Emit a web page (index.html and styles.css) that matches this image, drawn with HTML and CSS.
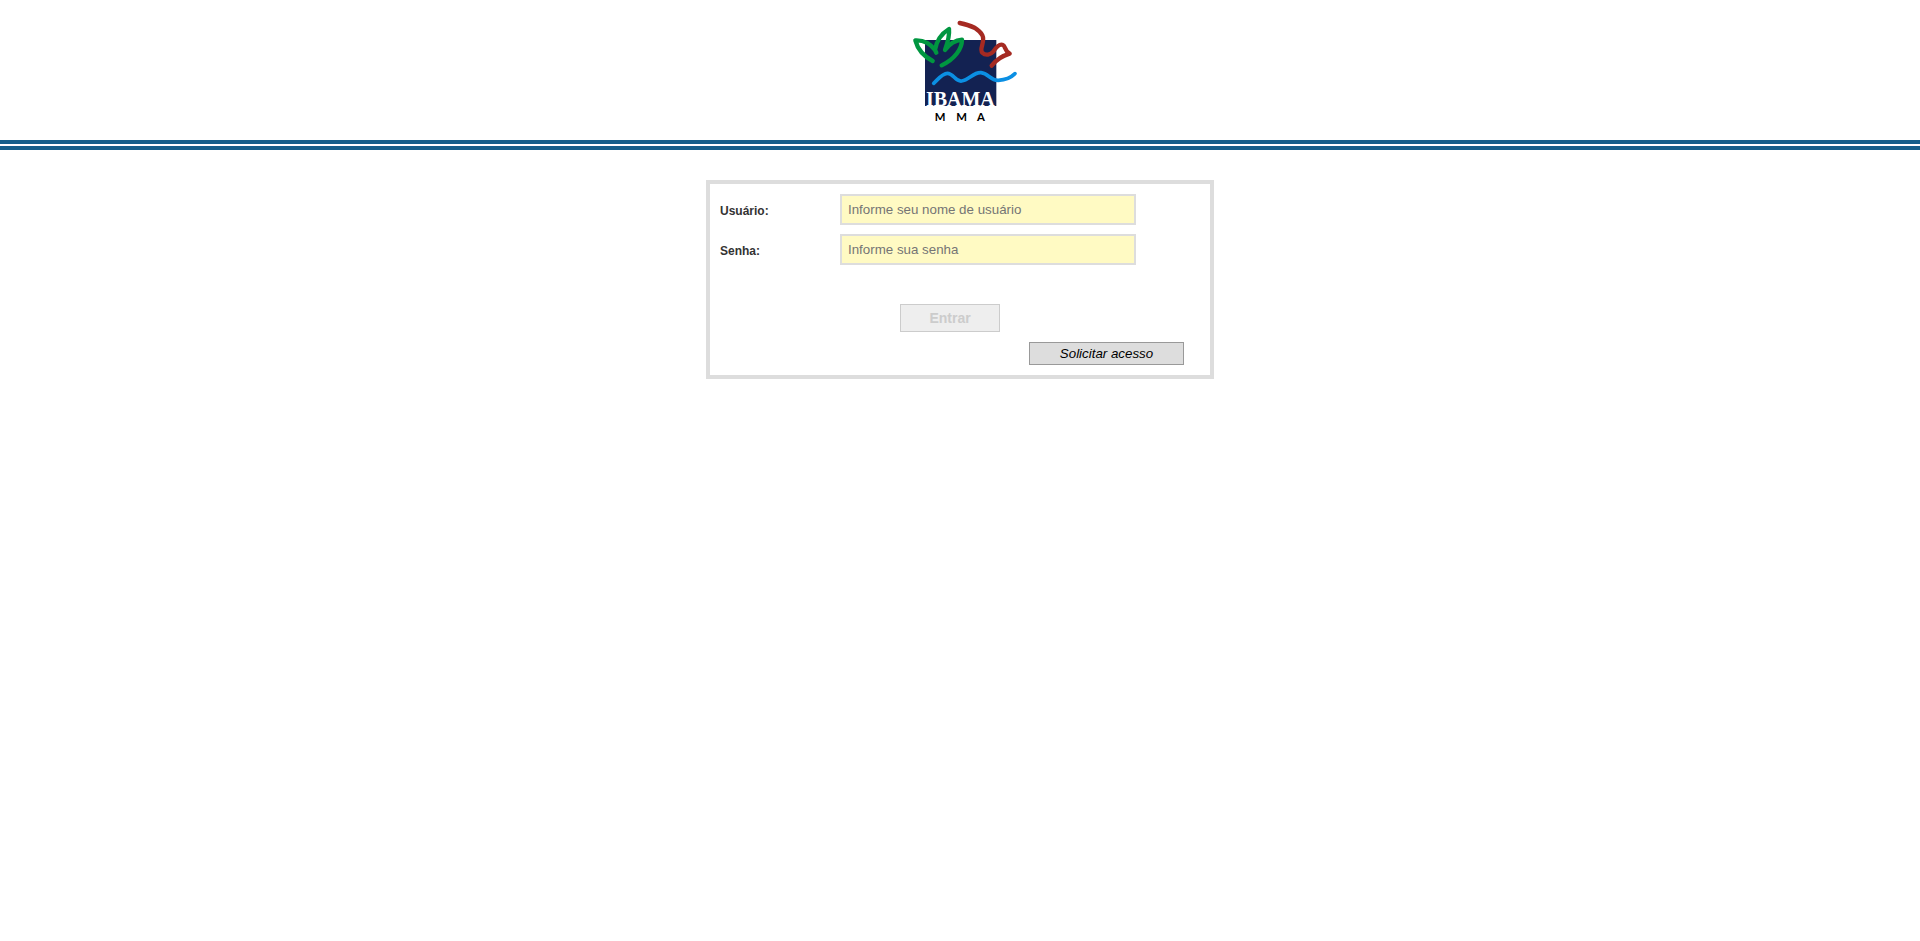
FILE: index.html
```html
<!DOCTYPE html>
<html lang="pt-BR">
<head>
<meta charset="utf-8">
<title>IBAMA</title>
<link rel="stylesheet" href="styles.css">
</head>
<body>
<header class="header">
  <svg class="logo" viewBox="0 0 360 360" role="img" aria-label="IBAMA MMA">
    <rect class="logo-square" x="75" y="90" width="214" height="198"/>
    <path class="logo-stroke logo-leaf" d="M98 153C74 140 53 118 46 91C68 90 91 100 105 120C109 96 124 71 147 57C149 76 143 98 135 120C147 104 165 91 186 89C186 116 165 147 125 166M105 120L109 128"/>
    <path class="logo-stroke logo-bird" d="M179 39C206 44 236 55 247 76C257 96 236 117 247 128C257 138 272 134 280 125C287 114 297 100 309 105C317 108 312 121 329 131C309 137 289 149 275 167"/>
    <path class="logo-stroke logo-wave" d="M101 220C114 208 127 190 142 190C161 190 166 216 185 213C207 211 220 186 243 188C266 190 270 212 295 211C319 210 334 202 345 191"/>
    <text class="logo-name" x="181" y="288">IBAMA</text>
    <text class="logo-dept" x="120" y="332">M</text>
    <text class="logo-dept" x="185" y="332">M</text>
    <text class="logo-dept" x="243" y="332">A</text>
  </svg>
</header>
<div class="divider"></div>
<main class="content">
  <form class="login">
    <div class="field">
      <label class="label" for="usuario">Usuário:</label>
      <input class="input" id="usuario" type="text" placeholder="Informe seu nome de usuário">
    </div>
    <div class="field">
      <label class="label" for="senha">Senha:</label>
      <input class="input" id="senha" type="password" placeholder="Informe sua senha">
    </div>
    <div class="actions">
      <button class="submit" type="submit" disabled>Entrar</button>
    </div>
    <div class="request">
      <button class="request-button" type="button">Solicitar acesso</button>
    </div>
  </form>
</main>
</body>
</html>
```

FILE: styles.css
```css
* {
  box-sizing: border-box;
}

body {
  margin: 0;
  background: #fff;
  color: #333;
  font-family: "Liberation Sans", Arial, sans-serif;
  font-size: 12px;
}

.header {
  display: flex;
  justify-content: center;
  padding: 10px;
}

.logo {
  width: 120px;
  height: 120px;
}

.logo-square {
  fill: #132252;
}

.logo-stroke {
  fill: none;
  stroke-width: 13;
  stroke-linecap: round;
  stroke-linejoin: round;
}

.logo-leaf {
  stroke: #009640;
}

.logo-bird {
  stroke: #a52a22;
}

.logo-wave {
  stroke: #0b8fe3;
  stroke-width: 11;
}

.logo-name,
.logo-dept {
  font-weight: bold;
  text-anchor: middle;
}

.logo-name {
  fill: #fff;
  font-family: "Liberation Serif", serif;
  font-size: 60px;
}

.logo-dept {
  fill: #000;
  font-family: Lato, sans-serif;
  font-size: 34px;
}

.divider {
  height: 10px;
  border: solid #155f8a;
  border-width: 4px 0;
}

.content {
  display: flex;
  justify-content: center;
  padding: 30px 10px;
}

.login {
  width: 100%;
  max-width: 508px;
  padding: 10px;
  border: 4px solid #ddd;
}

.field {
  display: flex;
  align-items: center;
  margin-bottom: 9px;
}

.label {
  width: 120px;
  padding-top: 2px;
  font-weight: bold;
}

.input {
  width: 296px;
  height: 31px;
  padding: 0 6px;
  border: 2px solid #ddd;
  background: #fffac3;
  font-family: inherit;
}

.input::placeholder {
  color: #757575;
}

.actions {
  display: flex;
  justify-content: center;
  padding: 30px 20px 10px 0;
}

.submit {
  width: 100px;
  height: 28px;
  padding: 0;
  border: 1px solid #ccc;
  background: #eee;
  color: #ccc;
  font-family: inherit;
  font-size: 14px;
  font-weight: bold;
}

.request {
  display: flex;
  justify-content: flex-end;
  padding-right: 16px;
}

.request-button {
  width: 155px;
  height: 23px;
  padding: 0;
  border: 1px solid #999;
  background: #ddd;
  color: #000;
  font-family: inherit;
  font-style: italic;
}
```
